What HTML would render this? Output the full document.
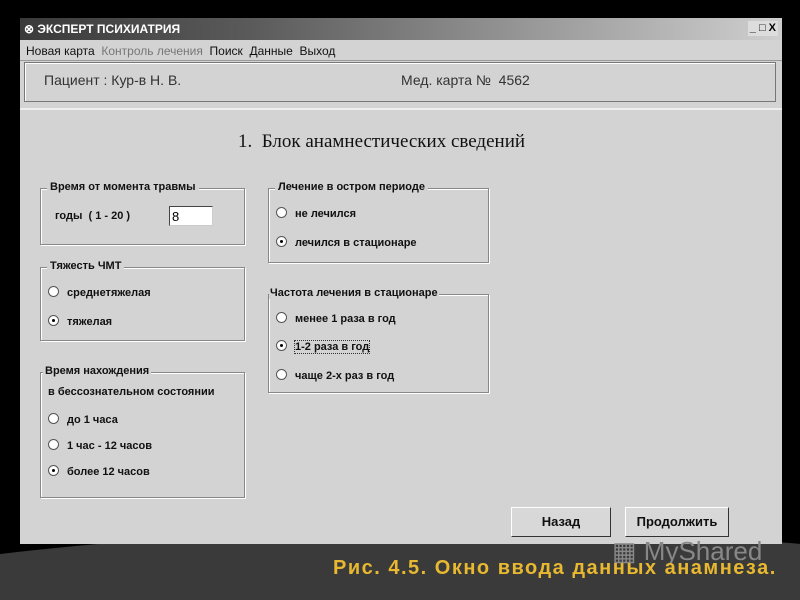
<!DOCTYPE html><html><head><meta charset="utf-8"><style>
html,body{margin:0;width:800px;height:600px;overflow:hidden}
body{background:#000;position:relative;font-family:"Liberation Sans",sans-serif}
.a{position:absolute}
.bgwrap{position:absolute;left:0;top:0;width:800px;height:600px;overflow:hidden}
.bgl{position:absolute;left:-300px;top:530px;width:1500px;height:400px;background:#3a3a3a;border-radius:50%/30%;}
.win{position:absolute;left:20px;top:18px;width:762px;height:526px;background:#d3d3d3}
.t{position:absolute;left:0;top:0;width:762px;height:22px;background:linear-gradient(90deg,#3a3a3a,#5a5a5a 30%,#cfcfcf);color:#fff;font-size:12px;font-weight:bold;line-height:22px}
.g{position:absolute;border:1px solid #888;box-shadow:1px 1px 0 #fff, inset 1px 1px 0 #fff}
.g .l{position:absolute;background:#d3d3d3;top:-8px;left:6px;padding:0 3px;font-size:11px;font-weight:bold;color:#111}
.r{position:absolute;font-size:11px;font-weight:bold;color:#111;white-space:nowrap}
.r i{display:inline-block;width:9px;height:9px;border-radius:50%;background:#fff;border:1px solid #555;vertical-align:-1px;margin-right:8px;position:relative}
.r i.s::after{content:"";position:absolute;left:3px;top:3px;width:3px;height:3px;background:#000;border-radius:50%}
.btn{position:absolute;height:28px;background:#d8d8d8;border:1px solid #fff;border-right-color:#333;border-bottom-color:#333;font-size:13px;font-weight:bold;text-align:center;line-height:28px;color:#111}
</style></head><body>
<div class="bgwrap"><div class="bgl"></div></div>
<div class="win">
<div class="t"><span style="margin-left:4px">⊗ ЭКСПЕРТ ПСИХИАТРИЯ</span>
<span class="a" style="right:4px;top:3px;color:#000;font-size:11px;background:#ddd;padding:0 2px;line-height:15px">_ □ X</span></div>
<div class="a" style="left:6px;top:26px;font-size:12px;color:#111">Новая карта &nbsp;<span style="color:#777">Контроль лечения</span>&nbsp; Поиск &nbsp;Данные &nbsp;Выход</div>
<div class="a" style="left:0;top:42px;width:762px;height:1px;background:#999"></div>
<div class="a" style="left:4px;top:44px;width:750px;height:38px;border:1px solid #777;box-shadow:inset 1px 1px 0 #fff"></div>
<div class="a" style="left:24px;top:54px;font-size:14px;color:#333">Пациент : Кур-в Н. В.</div>
<div class="a" style="left:381px;top:54px;font-size:14px;color:#333">Мед. карта №&nbsp; 4562</div>
<div class="a" style="left:0;top:90px;width:762px;height:2px;background:#eee"></div>
<div class="a" style="left:218px;top:113px;font-family:'Liberation Serif',serif;font-size:19px;color:#111">1.&nbsp; Блок анамнестических сведений</div>
</div>
<div class="g" style="left:40px;top:188px;width:203px;height:55px"><span class="l">Время от момента травмы</span></div>
<div class="r" style="left:55px;top:210px">годы&nbsp; ( 1 - 20 )</div>
<div class="a" style="left:169px;top:206px;width:44px;height:20px;background:#fff;border:1px solid #444;border-right-color:#ccc;border-bottom-color:#ccc;font-size:13px;line-height:20px;padding-left:2px;box-sizing:border-box">8</div>
<div class="g" style="left:40px;top:267px;width:203px;height:72px"><span class="l">Тяжесть ЧМТ</span></div>
<div class="r" style="left:48px;top:286px"><i></i>среднетяжелая</div>
<div class="r" style="left:48px;top:315px"><i class="s"></i>тяжелая</div>
<div class="g" style="left:40px;top:372px;width:203px;height:124px"><span class="l" style="left:2px;padding:0 2px">Время нахождения</span></div>
<div class="r" style="left:48px;top:386px">в бессознательном состоянии</div>
<div class="r" style="left:48px;top:413px"><i></i>до 1 часа</div>
<div class="r" style="left:48px;top:439px"><i></i>1 час - 12 часов</div>
<div class="r" style="left:48px;top:465px"><i class="s"></i>более 12 часов</div>
<div class="g" style="left:268px;top:188px;width:219px;height:73px"><span class="l">Лечение в остром периоде</span></div>
<div class="r" style="left:276px;top:207px"><i></i>не лечился</div>
<div class="r" style="left:276px;top:236px"><i class="s"></i>лечился в стационаре</div>
<div class="g" style="left:268px;top:294px;width:219px;height:97px"><span class="l" style="left:0;padding:0 1px">Частота лечения в стационаре</span></div>
<div class="r" style="left:276px;top:312px"><i></i>менее 1 раза в год</div>
<div class="r" style="left:276px;top:340px"><i class="s"></i><span style="outline:1px dotted #333">1-2 раза в год</span></div>
<div class="r" style="left:276px;top:369px"><i></i>чаще 2-х раз в год</div>
<div class="btn" style="left:511px;top:507px;width:98px">Назад</div>
<div class="btn" style="left:625px;top:507px;width:102px">Продолжить</div>
<div class="a" style="left:612px;top:536px;font-size:26px;color:#888">▦ MyShared</div>
<div class="a" style="left:333px;top:557px;font-size:20px;font-weight:bold;color:#e8b830;letter-spacing:1.5px;white-space:nowrap">Рис. 4.5. Окно ввода данных анамнеза.</div>
</body></html>
